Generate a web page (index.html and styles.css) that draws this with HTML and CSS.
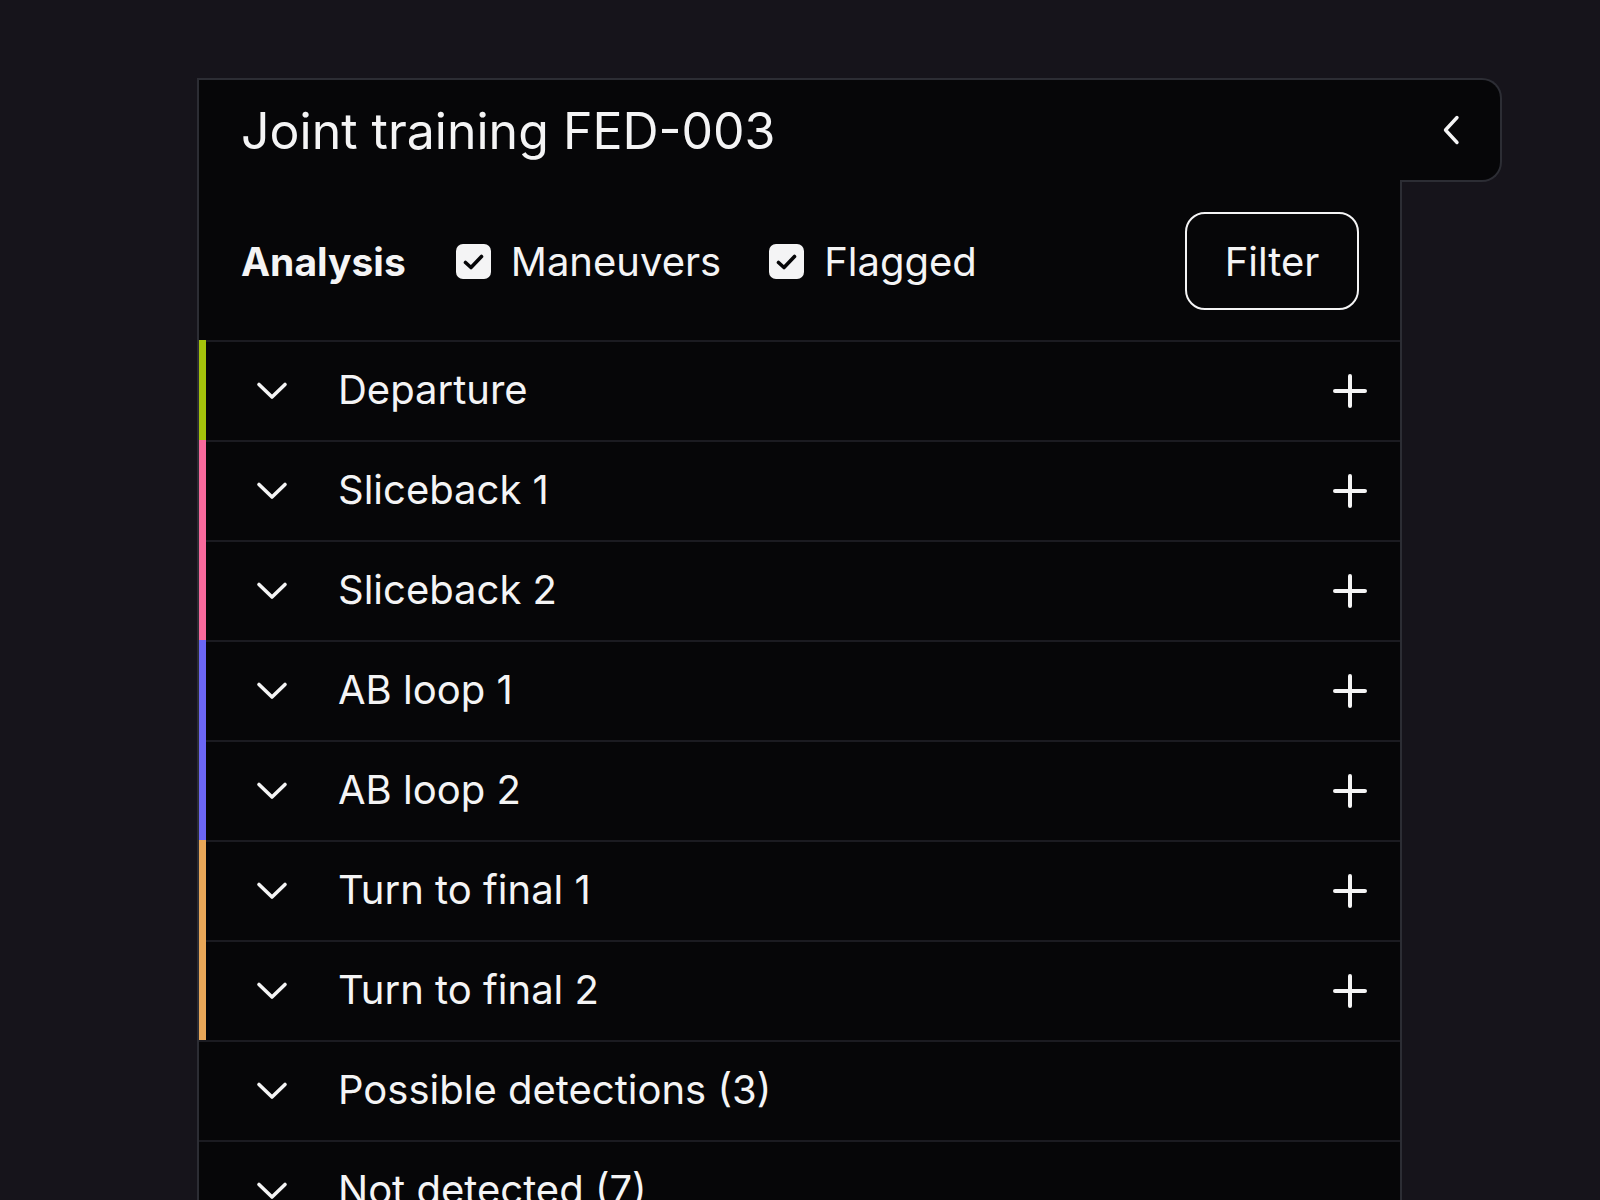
FILE: index.html
```html
<!DOCTYPE html>
<html lang="en">
<head>
<meta charset="utf-8">
<title>Joint training FED-003</title>
<link rel="stylesheet" href="styles.css">
</head>
<body>
<div class="panel">
  <div class="header">
    <div class="header-main">
      <h1 class="title">Joint training FED-003</h1>
    </div>
    <div class="header-tab">
      <svg class="icon-back" width="32" height="32" viewBox="0 0 32 32" fill="none" stroke="currentColor" stroke-width="3.4" stroke-linecap="round" stroke-linejoin="round"><path d="M20 3.5 L8.5 16 L20 28.5"/></svg>
    </div>
  </div>
  <div class="body">
    <div class="toolbar">
      <span class="toolbar-label">Analysis</span>
      <label class="check">
        <span class="check-box"><svg width="35" height="35" viewBox="0 0 35 35" fill="none" stroke="#060608" stroke-width="3.6" stroke-linecap="round" stroke-linejoin="round"><path d="M9.5 18.5 L15 23.5 L25.5 12.5"/></svg></span>
        <span class="check-text">Maneuvers</span>
      </label>
      <label class="check">
        <span class="check-box"><svg width="35" height="35" viewBox="0 0 35 35" fill="none" stroke="#060608" stroke-width="3.6" stroke-linecap="round" stroke-linejoin="round"><path d="M9.5 18.5 L15 23.5 L25.5 12.5"/></svg></span>
        <span class="check-text">Flagged</span>
      </label>
      <button class="filter-btn">Filter</button>
    </div>

    <div class="row row-green">
      <span class="bar"></span>
      <div class="row-main">
        <svg class="chev" width="32" height="32" viewBox="0 0 32 32" fill="none" stroke="currentColor" stroke-width="3.6" stroke-linecap="round" stroke-linejoin="round"><path d="M3 9.5 L16 22 L29 9.5"/></svg>
        <span class="row-label">Departure</span>
        <svg class="plus" width="40" height="40" viewBox="0 0 40 40" fill="none" stroke="currentColor" stroke-width="4" stroke-linecap="round"><path d="M20 5 V35 M5 20 H35"/></svg>
      </div>
    </div>
    <div class="row row-pink">
      <span class="bar"></span>
      <div class="row-main">
        <svg class="chev" width="32" height="32" viewBox="0 0 32 32" fill="none" stroke="currentColor" stroke-width="3.6" stroke-linecap="round" stroke-linejoin="round"><path d="M3 9.5 L16 22 L29 9.5"/></svg>
        <span class="row-label">Sliceback 1</span>
        <svg class="plus" width="40" height="40" viewBox="0 0 40 40" fill="none" stroke="currentColor" stroke-width="4" stroke-linecap="round"><path d="M20 5 V35 M5 20 H35"/></svg>
      </div>
    </div>
    <div class="row row-pink">
      <span class="bar"></span>
      <div class="row-main">
        <svg class="chev" width="32" height="32" viewBox="0 0 32 32" fill="none" stroke="currentColor" stroke-width="3.6" stroke-linecap="round" stroke-linejoin="round"><path d="M3 9.5 L16 22 L29 9.5"/></svg>
        <span class="row-label">Sliceback 2</span>
        <svg class="plus" width="40" height="40" viewBox="0 0 40 40" fill="none" stroke="currentColor" stroke-width="4" stroke-linecap="round"><path d="M20 5 V35 M5 20 H35"/></svg>
      </div>
    </div>
    <div class="row row-purple">
      <span class="bar"></span>
      <div class="row-main">
        <svg class="chev" width="32" height="32" viewBox="0 0 32 32" fill="none" stroke="currentColor" stroke-width="3.6" stroke-linecap="round" stroke-linejoin="round"><path d="M3 9.5 L16 22 L29 9.5"/></svg>
        <span class="row-label">AB loop 1</span>
        <svg class="plus" width="40" height="40" viewBox="0 0 40 40" fill="none" stroke="currentColor" stroke-width="4" stroke-linecap="round"><path d="M20 5 V35 M5 20 H35"/></svg>
      </div>
    </div>
    <div class="row row-purple">
      <span class="bar"></span>
      <div class="row-main">
        <svg class="chev" width="32" height="32" viewBox="0 0 32 32" fill="none" stroke="currentColor" stroke-width="3.6" stroke-linecap="round" stroke-linejoin="round"><path d="M3 9.5 L16 22 L29 9.5"/></svg>
        <span class="row-label">AB loop 2</span>
        <svg class="plus" width="40" height="40" viewBox="0 0 40 40" fill="none" stroke="currentColor" stroke-width="4" stroke-linecap="round"><path d="M20 5 V35 M5 20 H35"/></svg>
      </div>
    </div>
    <div class="row row-orange">
      <span class="bar"></span>
      <div class="row-main">
        <svg class="chev" width="32" height="32" viewBox="0 0 32 32" fill="none" stroke="currentColor" stroke-width="3.6" stroke-linecap="round" stroke-linejoin="round"><path d="M3 9.5 L16 22 L29 9.5"/></svg>
        <span class="row-label">Turn to final 1</span>
        <svg class="plus" width="40" height="40" viewBox="0 0 40 40" fill="none" stroke="currentColor" stroke-width="4" stroke-linecap="round"><path d="M20 5 V35 M5 20 H35"/></svg>
      </div>
    </div>
    <div class="row row-orange">
      <span class="bar"></span>
      <div class="row-main">
        <svg class="chev" width="32" height="32" viewBox="0 0 32 32" fill="none" stroke="currentColor" stroke-width="3.6" stroke-linecap="round" stroke-linejoin="round"><path d="M3 9.5 L16 22 L29 9.5"/></svg>
        <span class="row-label">Turn to final 2</span>
        <svg class="plus" width="40" height="40" viewBox="0 0 40 40" fill="none" stroke="currentColor" stroke-width="4" stroke-linecap="round"><path d="M20 5 V35 M5 20 H35"/></svg>
      </div>
    </div>
    <div class="row row-plain">
      <span class="bar"></span>
      <div class="row-main">
        <svg class="chev" width="32" height="32" viewBox="0 0 32 32" fill="none" stroke="currentColor" stroke-width="3.6" stroke-linecap="round" stroke-linejoin="round"><path d="M3 9.5 L16 22 L29 9.5"/></svg>
        <span class="row-label">Possible detections (3)</span>
      </div>
    </div>
    <div class="row row-plain">
      <span class="bar"></span>
      <div class="row-main">
        <svg class="chev" width="32" height="32" viewBox="0 0 32 32" fill="none" stroke="currentColor" stroke-width="3.6" stroke-linecap="round" stroke-linejoin="round"><path d="M3 9.5 L16 22 L29 9.5"/></svg>
        <span class="row-label">Not detected (7)</span>
      </div>
    </div>
  </div>
</div>
</body>
</html>
```

FILE: styles.css
```css
* { box-sizing: border-box; }

html, body {
  margin: 0;
  height: 100%;
  overflow: hidden;
}

body {
  background: #16141b;
  font-family: Inter, "Noto Sans", "Liberation Sans", sans-serif;
  font-weight: 400;
  color: #f4f4f5;
  padding: 78px 0 0 197px;
}

.panel {
  width: 1305px;
}

.header {
  display: flex;
  height: 104px;
}

.header-main {
  width: 1203px;
  background: #060608;
  border-top: 2px solid #2c2d34;
  border-left: 2px solid #2c2d34;
  display: flex;
  align-items: center;
  padding-left: 42px;
}

.title {
  margin: 0;
  font-size: 50px;
  font-weight: 400;
  line-height: 1;
  color: #f4f4f5;
}

.header-tab {
  width: 102px;
  background: #060608;
  border: 2px solid #2c2d34;
  border-left: none;
  border-radius: 0 20px 20px 0;
  display: flex;
  align-items: center;
  justify-content: center;
  color: #f4f4f5;
  padding-left: 6px;
}

.icon-back { display: block; }

.body {
  width: 1205px;
  background: #060608;
  border-left: 2px solid #2c2d34;
  border-right: 2px solid #2c2d34;
  min-height: 1100px;
}

.toolbar {
  height: 158px;
  display: flex;
  align-items: center;
  padding: 0 41px 0 42px;
  font-size: 40px;
}

.toolbar-label {
  font-weight: 700;
  font-size: 39px;
  margin-right: 50px;
}

.check {
  display: flex;
  align-items: center;
  gap: 20px;
  margin-right: 48px;
}

.check-box {
  width: 35px;
  height: 35px;
  border-radius: 7px;
  background: #f4f4f5;
  display: block;
}

.check-box svg { display: block; }

.filter-btn {
  margin-left: auto;
  width: 174px;
  height: 98px;
  border: 2px solid #f4f4f5;
  border-radius: 20px;
  background: transparent;
  color: #f4f4f5;
  font-family: inherit;
  font-weight: 400;
  font-size: 40px;
  padding: 0;
}

.row {
  display: flex;
  height: 100px;
}

.bar {
  width: 7px;
  flex: none;
}

.row-green .bar { background: #a4c20b; }
.row-pink .bar { background: #f8699c; }
.row-purple .bar { background: #6c66f4; }
.row-orange .bar { background: #e9a758; }
.row-plain .bar { border-top: 2px solid #1b1b21; }

.row-main {
  flex: 1;
  display: flex;
  align-items: center;
  border-top: 2px solid #1b1b21;
  padding: 0 30px 3px 50px;
}

.chev {
  display: block;
  flex: none;
  margin-right: 50px;
  margin-top: 3px;
}

.row-label {
  font-size: 40px;
  flex: 1;
}

.plus {
  display: block;
  flex: none;
  margin-top: 3px;
}
```
